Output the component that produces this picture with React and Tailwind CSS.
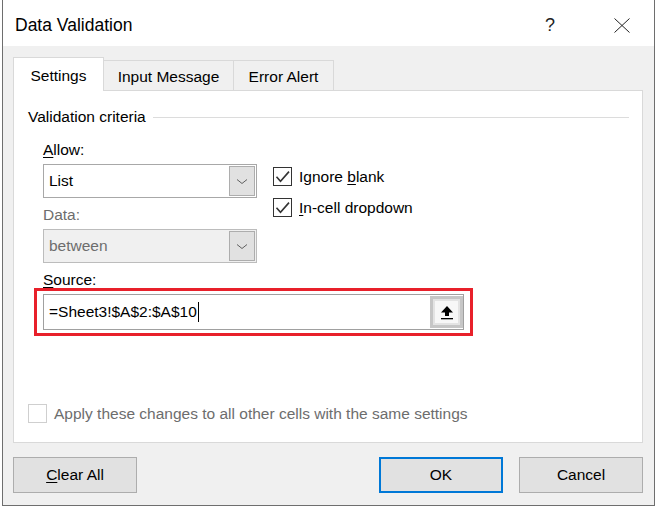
import React from 'react';

function CheckBox({ checked, disabled }) {
  return (
    <div
      className={
        disabled
          ? 'w-[19px] h-[19px] border border-[#cfcfcf] bg-white'
          : 'w-[19px] h-[19px] border border-[#333333] bg-white'
      }
    >
      {checked && (
        <svg width="17" height="17" viewBox="0 0 17 17">
          <path d="M2.5 8.8 L6.5 13.2 L15 3.6" fill="none" stroke="#333333" strokeWidth="1.6" />
        </svg>
      )}
    </div>
  );
}

function Chevron() {
  return (
    <svg width="12" height="7" viewBox="0 0 12 7">
      <path d="M1 1.5 L6 5.5 L11 1.5" fill="none" stroke="#606060" strokeWidth="1" />
    </svg>
  );
}

function Select({ value, disabled }) {
  return (
    <div
      className={
        disabled
          ? 'flex w-[214px] h-[34px] border border-[#bcbcbc] bg-[#f0f0f0]'
          : 'flex w-[214px] h-[34px] border border-[#a8a8a8] bg-white'
      }
    >
      <div
        className={
          disabled
            ? 'flex-1 flex items-center pl-[5px] text-[#6d6d6d]'
            : 'flex-1 flex items-center pl-[5px]'
        }
      >
        {value}
      </div>
      <div className="w-[26px] my-[1px] mr-[1px] border border-[#adadad] bg-[#e1e1e1] flex items-center justify-center">
        <Chevron />
      </div>
    </div>
  );
}

export default function App() {
  return (
    <div className="w-[657px] h-[506px] bg-white text-black text-[15.5px] font-['Liberation_Sans',Arial,sans-serif]">
      <div className="ml-[2px] w-[653px] h-[506px] border-x border-b border-[#6e6e6e] bg-[#f0f0f0] flex flex-col">
        {/* Title bar */}
        <header className="h-[46px] shrink-0 bg-white flex items-center pl-[12px] pt-[4px]">
          <span className="text-[17.5px]">Data Validation</span>
          <span className="ml-auto w-[10px] text-center text-[18px] text-[#222]">?</span>
          <svg className="ml-[59px] mr-[24px]" width="16" height="15" viewBox="0 0 16 15">
            <path d="M0.5 0.5 L15.5 14.5 M15.5 0.5 L0.5 14.5" stroke="#222" strokeWidth="1" />
          </svg>
        </header>

        {/* Tabs */}
        <div className="mt-[11px] ml-[10px] h-[33px] flex items-end">
          <div className="relative z-10 -mb-px h-[34px] w-[91px] border-x border-t border-[#d9d9d9] bg-white flex items-center justify-center pt-[2px]">
            Settings
          </div>
          <div className="h-[30px] w-[130px] border-t border-r border-[#d9d9d9] flex items-center justify-center pt-[2px]">
            Input Message
          </div>
          <div className="h-[30px] w-[100px] border-t border-r border-[#d9d9d9] flex items-center justify-center pt-[2px]">
            Error Alert
          </div>
        </div>

        {/* Panel */}
        <div className="ml-[10px] w-[630px] h-[353px] shrink-0 border border-[#d9d9d9] bg-white flex flex-col pl-[14px] pr-[13px]">
          <div className="mt-[16px] h-[20px] flex items-center">
            <span>Validation criteria</span>
            <div className="flex-1 h-px bg-[#dcdcdc] ml-[7px]" />
          </div>

          <div className="pl-[15px] flex flex-col">
            <div className="mt-[13px] h-[20px] leading-[20px]">
              <span className="underline underline-offset-2">A</span>llow:
            </div>
            <div className="mt-[4px] h-[34px] flex items-start">
              <Select value="List" />
              <div className="ml-[16px] mt-[3px] flex flex-col gap-[12px]">
                <div className="flex items-center h-[19px]">
                  <CheckBox checked />
                  <span className="ml-[7px]">
                    Ignore <span className="underline underline-offset-2">b</span>lank
                  </span>
                </div>
                <div className="flex items-center h-[19px]">
                  <CheckBox checked />
                  <span className="ml-[7px]">
                    <span className="underline underline-offset-2">I</span>n-cell dropdown
                  </span>
                </div>
              </div>
            </div>
            <div className="mt-[7px] h-[20px] leading-[20px] text-[#6d6d6d]">Data:</div>
            <div className="mt-[4px]">
              <Select value="between" disabled />
            </div>
            <div className="mt-[8px] h-[18px] leading-[18px]">
              <span className="underline underline-offset-2">S</span>ource:
            </div>
            <div className="-mt-px -ml-[9px] w-[439px] h-[48px] border-[3px] border-[#e8202a] px-[6px] flex items-center">
              <div className="flex w-[421px] h-[36px] border border-[#a0a0a0] bg-white">
                <div className="flex-1 flex items-center pl-[5px]">
                  <span>=Sheet3!$A$2:$A$10</span>
                  <span className="w-px h-[20px] bg-black ml-px" />
                </div>
                <div className="w-[33px] my-[1px] border-[3px] border-[#c6c6c6] bg-[#e3e3e3] flex items-center justify-center">
                  <div className="w-[23px] h-[22px] bg-[#f7f7f7] flex items-center justify-center">
                    <svg width="14" height="15" viewBox="0 0 14 15">
                      <path d="M7 1 L13 7.5 L9 7.5 L9 11 L5 11 L5 7.5 L1 7.5 Z" fill="#000" />
                      <rect x="1" y="13" width="12" height="1.3" fill="#000" />
                    </svg>
                  </div>
                </div>
              </div>
            </div>
          </div>

          <div className="mt-[68px] flex items-center h-[19px]">
            <CheckBox disabled />
            <span className="ml-[7px] text-[#6d6d6d]">
              Apply these changes to all other cells with the same settings
            </span>
          </div>
        </div>

        {/* Buttons */}
        <div className="mt-[14px] ml-[10px] w-[630px] flex">
          <button className="w-[124px] h-[36px] border border-[#adadad] bg-[#e1e1e1]">
            <span className="underline underline-offset-2">C</span>lear All
          </button>
          <button className="ml-auto w-[124px] h-[36px] border-2 border-[#0078d7] bg-[#e1e1e1]">OK</button>
          <button className="ml-[16px] w-[124px] h-[36px] border border-[#adadad] bg-[#e1e1e1]">Cancel</button>
        </div>
      </div>
    </div>
  );
}
